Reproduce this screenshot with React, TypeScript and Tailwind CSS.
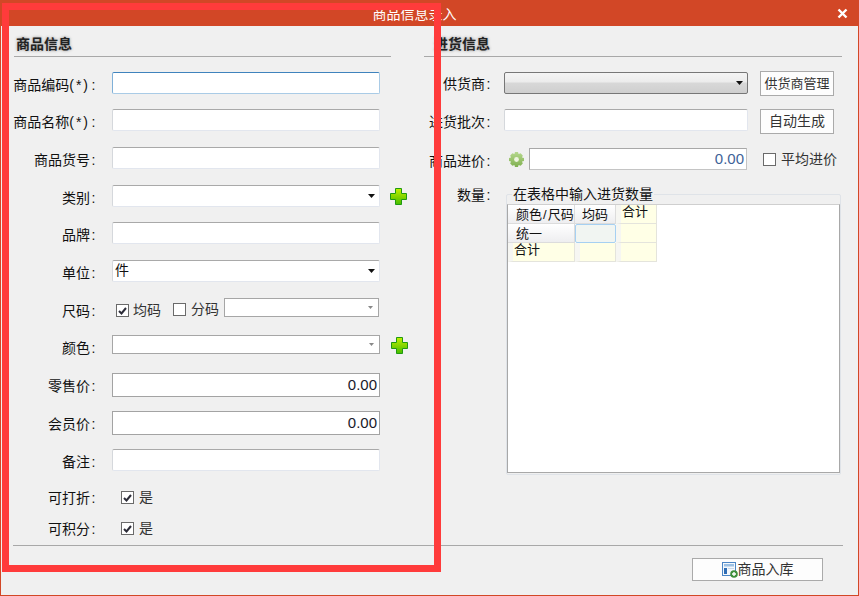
import type { ReactNode } from "react";

function Label({ text, mark = false, className = "w-[84px]" }: { text: string; mark?: boolean; className?: string }) {
  return (
    <span className={`mt-[2px] shrink-0 whitespace-nowrap text-right text-[14px] leading-[22px] text-[#111] ${className}`}>
      {text}
      {mark && <span className="tracking-[2px]">(*)</span>}
      <span className="inline-block w-[7px] text-center">:</span>
    </span>
  );
}

function TextBox({ focused = false, className = "" }: { focused?: boolean; className?: string }) {
  const border = focused
    ? "border-[#a9cbe6] border-t-[#3f83bd] border-l-[#7fb0d8]"
    : "border-[#e2e6ee] border-t-[#a9a9a9] border-l-[#d5d8dc]";
  return <div className={`h-[22px] rounded-[2px] border bg-white ${border} ${className}`} />;
}

function Arrow({ color = "#111", small = false }: { color?: string; small?: boolean }) {
  return (
    <svg width={small ? 5 : 7} height={small ? 3 : 4} viewBox="0 0 7 4" className="shrink-0">
      <path d="M0 0H7L3.5 4Z" fill={color} />
    </svg>
  );
}

function ComboBox({ text }: { text?: string }) {
  return (
    <div className="flex h-[22px] w-[268px] items-center justify-between rounded-[2px] border border-[#e2e6ee] border-t-[#a9a9a9] border-l-[#d5d8dc] bg-white pl-[2px] pr-[4px]">
      <span className="-mt-[2px] text-[14px] leading-[18px] text-[#111]">{text}</span>
      <Arrow />
    </div>
  );
}

function FlatCombo({ className = "" }: { className?: string }) {
  return (
    <div className={`flex h-[19px] items-center justify-end border border-[#a6a6a6] bg-white pr-[5px] ${className}`}>
      <Arrow color="#888" small />
    </div>
  );
}

function NumberBox({ value }: { value: string }) {
  return (
    <div className="flex h-[24px] w-[268px] items-center justify-end border border-[#a3a3a3] bg-white pr-[2px] text-[15px] text-[#1a1a2a]">
      {value}
    </div>
  );
}

function CheckBox({ checked = false, className = "" }: { checked?: boolean; className?: string }) {
  return (
    <span className={`flex h-[13px] w-[13px] shrink-0 items-center justify-center border border-[#6a6a6a] bg-white ${className}`}>
      {checked && (
        <svg width="9" height="8" viewBox="0 0 9 8">
          <path d="M1 4L3.5 6.5L8 1" fill="none" stroke="#2c2c38" strokeWidth="2" />
        </svg>
      )}
    </span>
  );
}

function PlusIcon() {
  return (
    <svg width="17" height="17" viewBox="0 0 17 17" className="shrink-0">
      <defs>
        <linearGradient id="plusFill" x1="0" y1="0" x2="0" y2="1">
          <stop offset="0" stopColor="#c4f000" />
          <stop offset="1" stopColor="#46bc00" />
        </linearGradient>
      </defs>
      <path d="M5.5 .5H11.5V5.5H16.5V11.5H11.5V16.5H5.5V11.5H.5V5.5H5.5Z" fill="url(#plusFill)" stroke="#1f9a10" />
    </svg>
  );
}

function GearIcon() {
  return (
    <svg width="15" height="15" viewBox="0 0 15 15" className="mr-[5px] shrink-0">
      <defs>
        <linearGradient id="gearFill" x1="0" y1="0" x2="0" y2="1">
          <stop offset="0" stopColor="#b6d88e" />
          <stop offset="1" stopColor="#7fb04f" />
        </linearGradient>
      </defs>
      <path
        d="M6 0H9L9.6 2 11.6 1.2 13.8 3.4 13 5.4 15 6V9L13 9.6 13.8 11.6 11.6 13.8 9.6 13 9 15H6L5.4 13 3.4 13.8 1.2 11.6 2 9.6 0 9V6L2 5.4 1.2 3.4 3.4 1.2 5.4 2Z"
        fill="url(#gearFill)"
      />
      <circle cx="7.5" cy="7.5" r="2.4" fill="#eef4e0" />
    </svg>
  );
}

function StockInIcon() {
  return (
    <svg width="16" height="16" viewBox="0 0 16 16" className="shrink-0">
      <rect x=".5" y=".5" width="13" height="13" fill="#f4f8fc" stroke="#4c86c6" />
      <rect x="2" y="2" width="10" height="2.5" fill="#9cc0e4" />
      <rect x="2" y="6" width="3" height="6" fill="#2f6db5" />
      <rect x="6" y="6" width="6" height="1" fill="#c9d9ea" />
      <circle cx="12" cy="12" r="3.8" fill="#3f8f3a" />
      <path d="M10 12H14M12 10V14" stroke="#fff" strokeWidth="1.4" />
    </svg>
  );
}

function HeadCell({ children, className = "justify-center" }: { children?: ReactNode; className?: string }) {
  return <div className={`flex items-center border-r border-b border-[#dcdcdc] bg-gradient-to-b from-white to-[#eeeef0] ${className}`}>{children}</div>;
}

function YellowCell({ children }: { children?: ReactNode }) {
  return (
    <div className="flex items-start border-r border-b border-l-[5px] border-[#e4e4dc] border-l-[#f6f6f2] bg-[#ffffe6] pl-[1px] leading-[14px]">
      {children}
    </div>
  );
}

function ActionButton({ label, className = "" }: { label: string; className?: string }) {
  return (
    <div className={`flex h-[25px] w-[74px] items-center justify-center border border-[#aaa] bg-[#fdfdfd] text-[#333] ${className}`}>{label}</div>
  );
}

export default function App() {
  return (
    <div className="relative flex h-[596px] w-[859px] flex-col overflow-hidden border-x border-b border-[#d24726] bg-[#f0f0f0] font-['Liberation_Sans','Noto_Sans_CJK_SC',sans-serif] text-[#111]">
      <header className="relative -mx-px flex h-[26px] shrink-0 items-center justify-center bg-[#d24726] pt-[3px] pr-[30px] text-[14px] text-white">
        商品信息录入
        <svg width="11" height="11" viewBox="0 0 11 11" className="absolute top-[8px] right-[11px]">
          <path d="M1.5 1.5L9.5 9.5M9.5 1.5L1.5 9.5" stroke="#fff" strokeWidth="2.4" />
        </svg>
      </header>

      <div className="flex h-[519px] shrink-0">
        <section className="flex w-[423px] shrink-0 flex-col pl-[12px]">
          <h2 className="ml-[1px] h-[31px] w-[377px] border-b border-[#a8a8a8] pl-[2px] pt-[8px] text-[14px] leading-[20px] font-bold text-[#222] [text-shadow:0_0_3px_#888]">商品信息</h2>

          <div className="mt-[15px] flex h-[37px] items-start gap-[15px]"><Label text="商品编码" mark /><TextBox focused className="w-[268px]" /></div>
          <div className="flex h-[38px] items-start gap-[15px]"><Label text="商品名称" mark /><TextBox className="w-[268px]" /></div>
          <div className="flex h-[38px] items-start gap-[15px]"><Label text="商品货号" /><TextBox className="w-[268px]" /></div>
          <div className="flex h-[37px] items-start gap-[15px]"><Label text="类别" /><ComboBox /><span className="-ml-[5px] mt-[3px]"><PlusIcon /></span></div>
          <div className="flex h-[38px] items-start gap-[15px]"><Label text="品牌" /><TextBox className="w-[268px]" /></div>
          <div className="flex h-[38px] items-start gap-[15px]"><Label text="单位" /><ComboBox text="件" /></div>
          <div className="flex h-[37px] items-start gap-[15px]">
            <Label text="尺码" />
            <div className="flex h-[22px] items-center text-[14px] text-[#333]">
              <CheckBox checked className="ml-[4px] mr-[4px] mt-[3px]" />
              <span className="mt-[3px] w-[39px]">均码</span>
              <CheckBox className="ml-px mr-[5px]" />
              <span className="w-[33px]">分码</span>
              <FlatCombo className="-mt-[3px] w-[155px]" />
            </div>
          </div>
          <div className="flex h-[38px] items-start gap-[15px]"><Label text="颜色" /><FlatCombo className="w-[268px]" /><span className="-ml-[4px] mt-[2px]"><PlusIcon /></span></div>
          <div className="flex h-[38px] items-start gap-[15px]"><Label text="零售价" /><NumberBox value="0.00" /></div>
          <div className="flex h-[38px] items-start gap-[15px]"><Label text="会员价" /><NumberBox value="0.00" /></div>
          <div className="flex h-[33px] items-start gap-[15px]"><Label text="备注" /><TextBox className="w-[268px]" /></div>
          <div className="flex h-[31px] items-center gap-[24px]"><Label text="可打折" className="w-[84px] -translate-y-px" /><span className="flex items-center gap-[5px] text-[14px] text-[#333]"><CheckBox checked />是</span></div>
          <div className="flex h-[31px] items-center gap-[24px]"><Label text="可积分" className="w-[84px] -translate-y-px" /><span className="flex items-center gap-[5px] text-[14px] text-[#333]"><CheckBox checked />是</span></div>
        </section>

        <section className="flex flex-1 flex-col pr-[16px]">
          <h2 className="h-[31px] border-b border-[#a8a8a8] pl-[10px] pt-[8px] text-[14px] leading-[20px] font-bold text-[#222] [text-shadow:0_0_3px_#888]">进货信息</h2>

          <div className="mt-[14px] flex h-[38px] shrink-0 items-start gap-[12px]">
            <Label text="供货商" className="w-[68px]" />
            <div className="mt-[1px] flex h-[22px] w-[244px] items-center justify-end rounded-[2px] border border-[#777] bg-[linear-gradient(#f4f4f4_0%,#ececec_45%,#d8d8d8_50%,#cfcfcf_100%)] pr-[4px]"><Arrow /></div>
            <ActionButton label="供货商管理" className="text-[13px]" />
          </div>
          <div className="flex h-[39px] shrink-0 items-start gap-[12px]">
            <Label text="进货批次" className="w-[68px]" />
            <TextBox className="w-[244px]" />
            <ActionButton label="自动生成" className="text-[14px]" />
          </div>
          <div className="flex h-[39px] shrink-0 items-start">
            <Label text="商品进价" className="w-[68px]" />
            <span className="ml-[17px] mt-[4px]"><GearIcon /></span>
            <div className="flex h-[22px] w-[218px] items-center justify-end border border-[#a8a8a8] border-r-[#c4c4c4] border-b-[#c4c4c4] bg-white pr-[2px] text-[15px] text-[#3f6398]">0.00</div>
            <CheckBox className="ml-[16px] mt-[5px]" />
            <span className="ml-[5px] whitespace-nowrap text-[14px] leading-[22px] text-[#333]">平均进价</span>
          </div>
          <div className="flex items-start">
            <span className="w-[68px] shrink-0 whitespace-nowrap text-right text-[14px] leading-[16px]">
              数量<span className="inline-block w-[7px] text-center">:</span>
            </span>
            <div className="relative ml-[14px] mt-[7px] h-[281px] w-[335px] rounded-[2px] border border-[#dfe3e8] pt-[9px]">
              <span className="absolute -top-[9px] left-[5px] bg-[#f0f0f0] px-[1px] text-[14px] leading-[16px] whitespace-nowrap">在表格中输入进货数量</span>
              <div className="h-[269px] w-[333px] border border-[#a8a8a8] border-t-[#cfcfcf] bg-white">
                <div className="grid h-[57px] w-[149px] grid-cols-[67px_41px_41px] grid-rows-[19px_19px_19px] text-[13px] leading-[15px] text-[#111]">
                  <HeadCell className="pl-[8px]">颜色<span className="mx-[1px]">/</span>尺码</HeadCell>
                  <HeadCell>均码</HeadCell>
                  <YellowCell>合计</YellowCell>
                  <HeadCell className="pl-[8px]">统一</HeadCell>
                  <div className="rounded-[2px] border border-[#a6d0f2] bg-[#f1f5f2]" />
                  <YellowCell />
                  <YellowCell>合计</YellowCell>
                  <YellowCell />
                  <YellowCell />
                </div>
              </div>
            </div>
          </div>
        </section>
      </div>

      <div className="ml-[12px] mr-[15px] h-[13px] shrink-0 border-t border-[#a8a8a8]" />
      <div className="flex justify-end pr-[35px]">
        <div className="flex h-[23px] w-[131px] items-center justify-center border border-[#aaa] bg-[#fdfdfd] text-[14px] text-[#333]">
          <StockInIcon />商品入库
        </div>
      </div>

      <div className="pointer-events-none absolute top-[3px] left-[1px] h-[569px] w-[439px] border-[7px] border-[#ff3b3b]" />
    </div>
  );
}
